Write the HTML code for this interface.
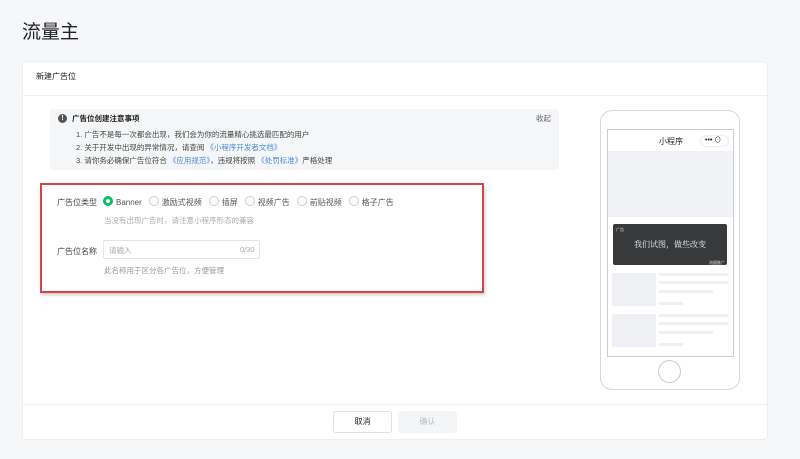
<!DOCTYPE html>
<html><head><meta charset="utf-8"><style>
*{margin:0;padding:0;box-sizing:border-box}
body{width:800px;height:459px;background:#f6f7f9;font-family:"Liberation Sans","Noto Sans CJK SC",sans-serif;position:relative;overflow:hidden;color:#333}
.a{position:absolute;white-space:nowrap}
.card{position:absolute;left:22px;top:61px;width:746px;height:379px;background:#fff;border-radius:4px;border:1px solid #eceef0}
.lnk{color:#4a8ad8}
.radio{display:inline-block;width:10px;height:10px;border:1px solid #ccc;border-radius:50%;vertical-align:-1px;margin-right:3px}
.on{border:3px solid #07c160}
.r{margin-right:7px}
.bar{position:absolute;background:#eef0f3}
</style></head><body>
<div class="a" style="left:22px;top:17px;font-size:19px;color:#222">流量主</div>
<div class="card"></div>
<div class="a" style="left:36px;top:71px;font-size:8px;color:#222">新建广告位</div>
<div class="a" style="left:23px;top:95px;width:744px;height:1px;background:#eef0f2"></div>
<div class="a" style="left:50px;top:109px;width:509px;height:61px;background:#f5f6f7;border-radius:3px"></div>
<div class="a" style="left:58px;top:114px;width:9px;height:9px;border-radius:50%;background:#555;color:#fff;font-size:7px;line-height:9px;text-align:center;font-weight:bold">!</div>
<div class="a" style="left:72px;top:113px;font-size:7.5px;color:#222;font-weight:bold">广告位创建注意事项</div>
<div class="a" style="left:536px;top:113px;font-size:7.5px;color:#666">收起</div>
<div class="a" style="left:76px;top:128px;font-size:7.5px;line-height:13px;color:#444">1. 广告不是每一次都会出现，我们会为你的流量精心挑选最匹配的用户<br>2. 关于开发中出现的异常情况，请查阅 <span class="lnk">《小程序开发者文档》</span><br>3. 请你务必确保广告位符合 <span class="lnk">《应用规范》</span>，违规将按照 <span class="lnk">《处罚标准》</span>严格处理</div>
<div class="a" style="left:40px;top:183px;width:444px;height:110px;border:2px solid #d9444a;box-shadow:1px 2px 3px rgba(0,0,0,.2)"></div>
<div class="a" style="left:57px;top:197px;font-size:8px;color:#444">广告位类型</div>
<div class="a" style="left:103px;top:196px;font-size:8px;color:#555"><span class="radio on"></span><span class="r">Banner</span><span class="radio"></span><span class="r">激励式视频</span><span class="radio"></span><span class="r">插屏</span><span class="radio"></span><span class="r">视频广告</span><span class="radio"></span><span class="r">前贴视频</span><span class="radio"></span>格子广告</div>
<div class="a" style="left:104px;top:215px;font-size:7.5px;color:#aaa">当没有出现广告时，请注意小程序形态的兼容</div>
<div class="a" style="left:57px;top:246px;font-size:8px;color:#444">广告位名称</div>
<div class="a" style="left:103px;top:240px;width:157px;height:19px;border:1px solid #e2e4e6;border-radius:2px"></div>
<div class="a" style="left:109px;top:245px;font-size:7.5px;color:#aaa">请输入</div>
<div class="a" style="left:240px;top:245px;font-size:7.5px;color:#aaa">0/30</div>
<div class="a" style="left:104px;top:265px;font-size:7.5px;color:#999">此名称用于区分各广告位，方便管理</div>
<div class="a" style="left:600px;top:110px;width:140px;height:280px;border:1px solid #d8d8d8;border-radius:12px;background:#fff"></div>
<div class="a" style="left:607px;top:129px;width:127px;height:228px;border:1px solid #ccc;background:#fff"></div>
<div class="a" style="left:659px;top:136px;font-size:8px;color:#222">小程序</div>
<div class="a" style="left:700px;top:135px;width:29px;height:12px;border:1px solid #eee;border-radius:6px;font-size:7px;line-height:10px;color:#222;padding-left:4px">•••&nbsp;⊙</div>
<div class="a" style="left:608px;top:151px;width:125px;height:66px;background:#f1f2f6"></div>
<div class="a" style="left:613px;top:224px;width:114px;height:41px;background:#38393b;border-radius:2px"></div>
<div class="a" style="left:616px;top:227px;font-size:4px;color:#ddd">广告</div>
<div class="a" style="left:634px;top:239px;font-size:8px;color:#eee;font-family:'Liberation Serif','Noto Serif CJK SC',serif">我们试图，做些改变</div>
<div class="a" style="left:709px;top:260px;font-size:4px;color:#ddd">流量推广</div>
<div class="bar" style="left:612px;top:273px;width:44px;height:33px"></div>
<div class="bar" style="left:659px;top:273px;width:69px;height:3px"></div>
<div class="bar" style="left:659px;top:281px;width:69px;height:3px"></div>
<div class="bar" style="left:659px;top:290px;width:54px;height:3px"></div>
<div class="bar" style="left:659px;top:302px;width:24px;height:3px"></div>
<div class="bar" style="left:612px;top:314px;width:44px;height:33px"></div>
<div class="bar" style="left:659px;top:314px;width:69px;height:3px"></div>
<div class="bar" style="left:659px;top:322px;width:69px;height:3px"></div>
<div class="bar" style="left:659px;top:331px;width:54px;height:3px"></div>
<div class="bar" style="left:659px;top:343px;width:24px;height:3px"></div>
<div class="a" style="left:658px;top:360px;width:23px;height:23px;border:1px solid #ccc;border-radius:50%"></div>
<div class="a" style="left:23px;top:404px;width:744px;height:1px;background:#eef0f2"></div>
<div class="a" style="left:333px;top:411px;width:59px;height:22px;border:1px solid #e0e0e0;border-radius:3px;font-size:8px;line-height:20px;text-align:center;color:#222">取消</div>
<div class="a" style="left:398px;top:411px;width:59px;height:22px;background:#f4f5f6;border-radius:3px;font-size:8px;line-height:22px;text-align:center;color:#bbb">确认</div>
</body></html>
